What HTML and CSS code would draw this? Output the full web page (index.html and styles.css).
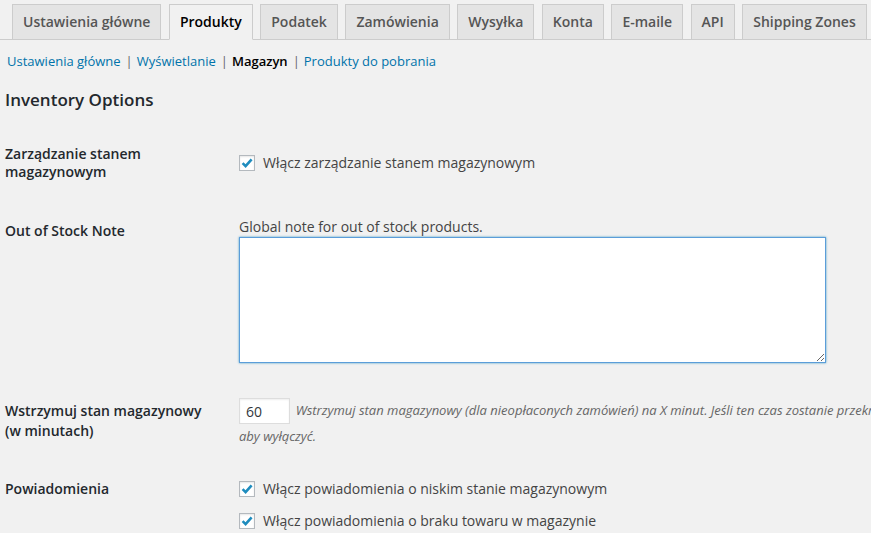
FILE: index.html
```html
<!DOCTYPE html>
<html lang="pl">
<head>
  <meta charset="UTF-8">
  <title>Ustawienia - Produkty - Magazyn</title>
  <link rel="stylesheet" href="styles.css">
</head>
<body>
  <!-- Main settings tabs -->
  <nav class="nav-tabs">
    <a class="nav-tab" href="#">Ustawienia główne</a>
    <a class="nav-tab active" href="#">Produkty</a>
    <a class="nav-tab" href="#">Podatek</a>
    <a class="nav-tab" href="#">Zamówienia</a>
    <a class="nav-tab" href="#">Wysyłka</a>
    <a class="nav-tab" href="#">Konta</a>
    <a class="nav-tab" href="#">E-maile</a>
    <a class="nav-tab" href="#">API</a>
    <a class="nav-tab" href="#">Shipping Zones</a>
  </nav>

  <!-- Sub sections -->
  <ul class="subsub">
    <li><a href="#">Ustawienia główne</a><span class="sep">|</span></li>
    <li><a href="#">Wyświetlanie</a><span class="sep">|</span></li>
    <li><span class="current">Magazyn</span><span class="sep">|</span></li>
    <li><a href="#">Produkty do pobrania</a></li>
  </ul>

  <h3 class="section-title">Inventory Options</h3>

  <form class="form-table">
    <div class="row row-manage">
      <div class="label">Zarządzanie stanem magazynowym</div>
      <div class="field">
        <label class="check"><span class="box"><svg viewBox="0 0 16 16" width="16" height="16"><path d="M3.6 8.2 L6.6 11.2 L12.6 4.4" fill="none" stroke="#1e8cbe" stroke-width="2.6"/></svg></span>Włącz zarządzanie stanem magazynowym</label>
      </div>
    </div>

    <div class="row row-note">
      <div class="label">Out of Stock Note</div>
      <div class="field">
        <p class="note-desc">Global note for out of stock products.</p>
        <textarea class="note-area"></textarea>
      </div>
    </div>

    <div class="row row-hold">
      <div class="label">Wstrzymuj stan magazynowy (w minutach)</div>
      <div class="field">
        <input class="small-input" type="text" value="60">
        <span class="desc">Wstrzymuj stan magazynowy (dla nieopłaconych zamówień) na X minut. Jeśli ten czas zostanie przekroczony, oczekujące zamówienie zostanie anulowane. Pozostaw puste, aby wyłączyć.</span>
      </div>
    </div>

    <div class="row row-notify">
      <div class="label">Powiadomienia</div>
      <div class="field">
        <label class="check"><span class="box"><svg viewBox="0 0 16 16" width="16" height="16"><path d="M3.6 8.2 L6.6 11.2 L12.6 4.4" fill="none" stroke="#1e8cbe" stroke-width="2.6"/></svg></span>Włącz powiadomienia o niskim stanie magazynowym</label>
        <label class="check"><span class="box"><svg viewBox="0 0 16 16" width="16" height="16"><path d="M3.6 8.2 L6.6 11.2 L12.6 4.4" fill="none" stroke="#1e8cbe" stroke-width="2.6"/></svg></span>Włącz powiadomienia o braku towaru w magazynie</label>
      </div>
    </div>
  </form>
</body>
</html>
```

FILE: styles.css
```css
html, body {
  overflow: hidden;
}
body {
  margin: 0;
  width: 1400px;
  background-color: #f1f1f1;
  color: #444;
  font-family: "Open Sans", "Liberation Sans", sans-serif;
  font-size: 14px;
}
a {
  color: #0073aa;
  text-decoration: none;
}

/* Tabs */
.nav-tabs {
  display: flex;
  padding-top: 4px;
  border-bottom: 1px solid #ccc;
}
.nav-tab {
  margin-left: 7.5px;
  padding: 5px 10px;
  border: 1px solid #ccc;
  border-bottom: none;
  background-color: #e4e4e4;
  color: #555;
  font-size: 14px;
  font-weight: 600;
  line-height: 24px;
}
.nav-tab:first-child {
  margin-left: 12px;
}
.nav-tab.active {
  background-color: #f1f1f1;
  color: #000;
  margin-bottom: -1px;
  border-bottom: 1px solid #f1f1f1;
}

/* Sub navigation */
.subsub {
  list-style: none;
  display: flex;
  margin: 11px 0 0 7px;
  padding: 0;
  font-size: 13px;
  line-height: 20px;
}
.subsub .sep {
  color: #666;
  margin: 0 4px 0 5px;
}
.subsub .current {
  color: #000;
  font-weight: 600;
}

.section-title {
  margin: 17px 0 0 5px;
  color: #23282d;
  font-size: 17px;
  font-weight: 600;
  line-height: 24px;
}

/* Form rows */
.form-table {
  margin-top: 33px;
}
.row {
  display: flex;
}
.label {
  width: 200px;
  padding: 0 34px 0 5px;
  color: #23282d;
  font-weight: 600;
  line-height: 18px;
}
.field {
  width: 1055px;
  line-height: 18px;
}
.check {
  display: flex;
  align-items: center;
  height: 18px;
}
.box {
  width: 16px;
  height: 16px;
  box-sizing: border-box;
  border: 1px solid #b4b9be;
  background-color: #fff;
  box-shadow: inset 0 1px 2px rgba(0, 0, 0, 0.1);
  margin-right: 8px;
  display: flex;
}
.box svg {
  margin: -1px;
}
.row-manage .field {
  padding-top: 9px;
}

.row-note {
  margin-top: 37px;
}
.note-desc {
  margin: 0;
  line-height: 18px;
}
.note-area {
  display: block;
  margin-top: 1px;
  width: 587px;
  height: 126px;
  box-sizing: border-box;
  border: 1px solid #5b9dd9;
  box-shadow: 0 0 2px rgba(30, 140, 190, 0.8);
  background-color: #fff;
}
.row-note .label {
  padding-top: 4px;
}

.row-hold {
  margin-top: 35px;
}
.row-hold .label {
  padding-top: 3px;
  line-height: 20px;
}
.small-input {
  width: 51px;
  height: 26px;
  box-sizing: border-box;
  border: 1px solid #ddd;
  box-shadow: inset 0 1px 2px rgba(0, 0, 0, 0.07);
  background-color: #fff;
  padding: 0 6px;
  font-family: inherit;
  font-size: 14px;
  color: #32373c;
  vertical-align: middle;
}
.desc {
  color: #666;
  font-style: italic;
  font-size: 13px;
  line-height: 24px;
  margin-left: 2px;
}

.row-notify {
  margin-top: 32px;
}
.row-notify .check + .check {
  margin-top: 14px;
}
```
